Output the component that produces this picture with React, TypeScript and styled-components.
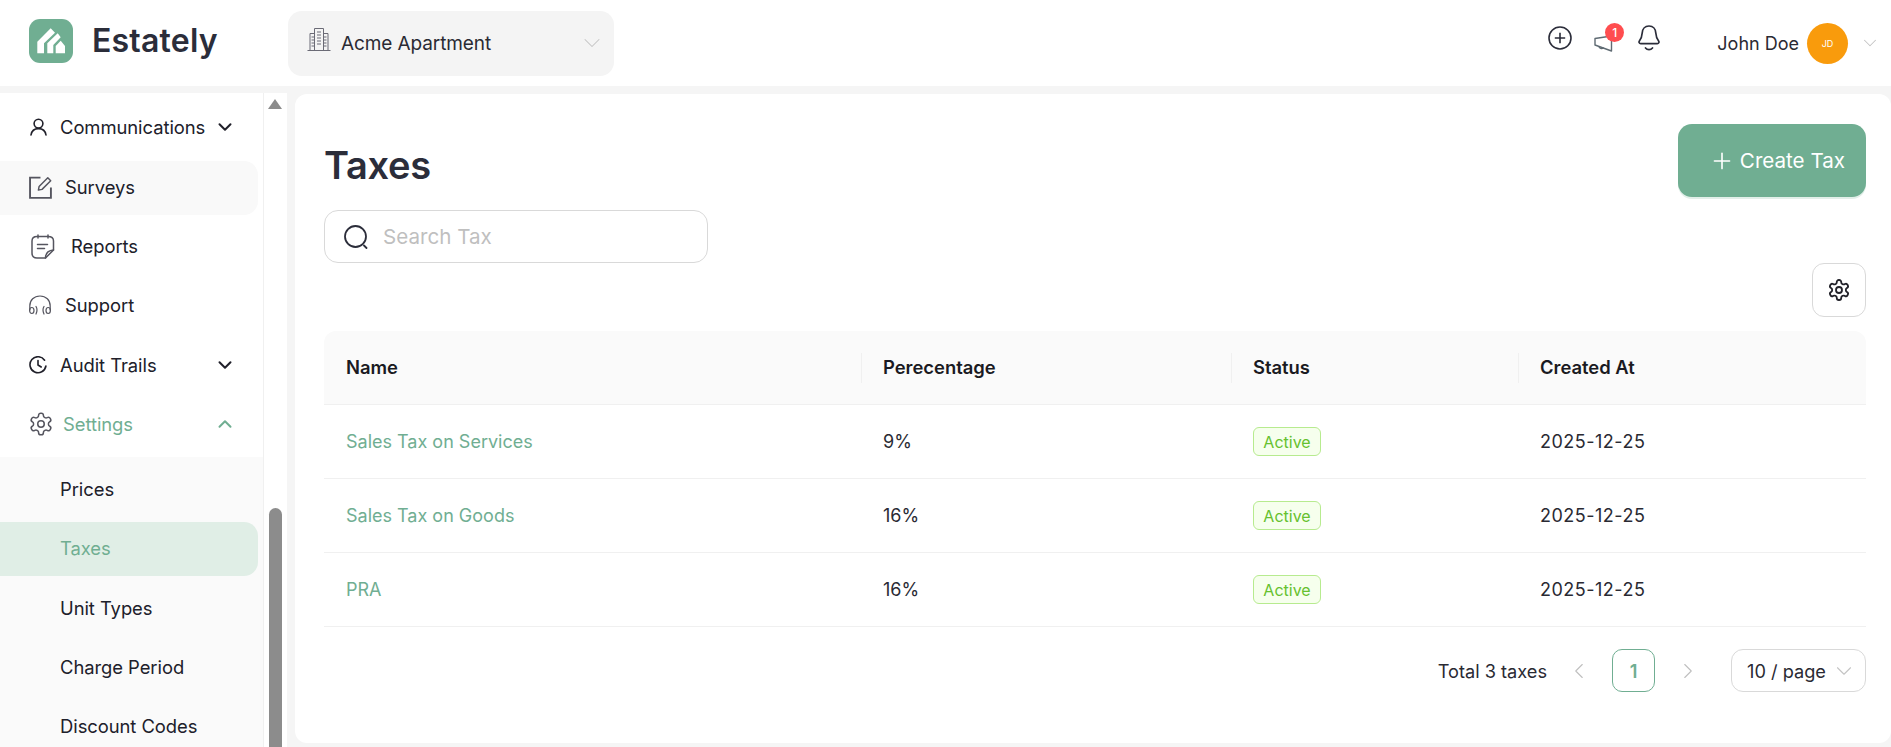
import React from "react";
import styled, { createGlobalStyle } from "styled-components";
import { ChevronDown, ChevronUp, ChevronLeft, ChevronRight, Plus } from "lucide-react";

const font = `"Inter", "Noto Sans", "Liberation Sans", sans-serif`;
const green = "#70ae92";

const Global = createGlobalStyle`
  html, body { margin: 0; padding: 0; height: 100%; overflow: hidden; background: #f5f5f5; }
  body { font-family: ${font}; color: #1f1f28; }
  #root { height: 100%; }
  * { box-sizing: border-box; }
`;

const Page = styled.div`
  width: 1891px;
  height: 747px;
  display: flex;
  flex-direction: column;
  overflow: hidden;
`;

const Header = styled.header`
  height: 86px;
  flex: none;
  background: #fff;
  display: flex;
  align-items: center;
  padding: 0 10px 0 29px;
`;

const Brand = styled.div`
  width: 259px;
  margin-bottom: 4px;
  display: flex;
  align-items: center;
  gap: 19px;
`;

const BrandName = styled.span`
  font-size: 32px;
  font-weight: 600;
  color: #2b2d3a;
  letter-spacing: 0.2px;
  margin-bottom: 2px;
`;

const PropertySelect = styled.div`
  width: 326px;
  height: 65px;
  border-radius: 14px;
  background: #f4f4f4;
  display: flex;
  align-items: center;
  padding: 0 8px 0 19px;
  color: #2a2a33;
  font-size: 19px;
`;

const PropertyIcon = styled.span`
  display: flex;
  margin-bottom: 9px;
`;

const PropertyLabel = styled.span`
  margin-left: 10px;
  flex: 1;
  letter-spacing: -0.1px;
`;

const HeaderActions = styled.div`
  margin-left: auto;
  display: flex;
  align-items: center;
`;

const ActionIcon = styled.div<{ $mr: number; $up?: number }>`
  position: relative;
  display: flex;
  margin-right: ${(p) => p.$mr}px;
  margin-bottom: ${(p) => p.$up ?? 0}px;
`;

const Badge = styled.span`
  position: absolute;
  top: -12px;
  right: -11px;
  width: 19px;
  height: 19px;
  border-radius: 50%;
  background: #ff4d4f;
  color: #fff;
  font-size: 12px;
  line-height: 19px;
  font-weight: 500;
  text-align: center;
`;

const UserName = styled.span`
  font-size: 18px;
  color: #2a2a33;
  margin-right: 8px;
`;

const Avatar = styled.div`
  width: 41px;
  height: 41px;
  border-radius: 50%;
  background: #f99b0c;
  color: #fff;
  font-size: 9px;
  display: flex;
  align-items: center;
  justify-content: center;
  margin-right: 11px;
`;

const Body = styled.div`
  flex: 1;
  display: flex;
  min-height: 0;
  padding-top: 7px;
`;

const Sidebar = styled.aside`
  width: 287px;
  flex: none;
  display: flex;
  background: #fff;
  overflow: hidden;
`;

const Nav = styled.nav`
  width: 264px;
  flex: none;
  padding-top: 8px;
  border-right: 1px solid #f0f0f0;
  overflow: hidden;
`;

const NavRow = styled.div<{ $hover?: boolean; $gapAfter?: number; $active?: boolean; $left: number }>`
  height: 54px;
  width: 258px;
  margin-bottom: ${(p) => p.$gapAfter ?? 5}px;
  padding: 0 22px 2px ${(p) => p.$left}px;
  display: flex;
  align-items: center;
  border-radius: 0 14px 14px 0;
  font-size: 18.4px;
  color: ${(p) => (p.$active ? green : "#20202a")};
  background: ${(p) => (p.$hover ? "#f9f9f9" : "transparent")};
`;

const NavIcon = styled.span<{ $w: number }>`
  width: ${(p) => p.$w}px;
  flex: none;
  display: flex;
  color: #4a4a55;
`;

const NavText = styled.span`
  flex: 1;
  white-space: nowrap;
  letter-spacing: -0.05px;
`;

const SubMenu = styled.div`
  background: #fafafa;
  padding-top: 6px;
`;

const SubRow = styled(NavRow)<{ $selected?: boolean }>`
  background: ${(p) => (p.$selected ? "#e0eee6" : "transparent")};
  color: ${(p) => (p.$selected ? green : "#20202a")};
`;

const ScrollTrack = styled.div`
  width: 23px;
  flex: none;
  position: relative;
`;

const ScrollArrow = styled.div`
  margin: 6px 0 0 4px;
  width: 0;
  height: 0;
  border-left: 7px solid transparent;
  border-right: 7px solid transparent;
  border-bottom: 10px solid #8c8c8c;
`;

const ScrollThumb = styled.div`
  position: absolute;
  left: 5px;
  top: 415px;
  bottom: -10px;
  width: 13px;
  border-radius: 7px 7px 0 0;
  background: #8c8c8c;
`;

const Main = styled.main`
  flex: 1;
  margin: 1px 0 4px 8px;
  background: #fff;
  border-radius: 12px;
  padding: 30px 25px 0 29px;
  min-width: 0;
`;

const TopRow = styled.div`
  display: flex;
  justify-content: space-between;
  align-items: flex-start;
  height: 86px;
`;

const Title = styled.h1`
  margin: 18px 0 0;
  font-size: 38px;
  line-height: 46px;
  font-weight: 600;
  color: #2b2d3a;
  letter-spacing: -0.3px;
`;

const CreateButton = styled.button`
  width: 188px;
  height: 73px;
  border: 0;
  border-radius: 14px;
  background: ${green};
  color: #fff;
  font-family: ${font};
  font-size: 20.6px;
  display: flex;
  align-items: center;
  justify-content: flex-end;
  gap: 5px;
  padding: 0 21px 0 0;
  box-shadow: 0 2px 0 rgba(112, 174, 146, 0.2);
`;

const SearchBox = styled.div`
  width: 384px;
  height: 53px;
  border: 1px solid #d9d9d9;
  border-radius: 14px;
  display: flex;
  align-items: center;
  padding-left: 19px;
  gap: 15px;
  color: #bfbfbf;
  font-size: 20.6px;
`;

const ToolRow = styled.div`
  display: flex;
  justify-content: flex-end;
`;

const SettingsButton = styled.div`
  width: 54px;
  height: 54px;
  border: 1px solid #d9d9d9;
  border-radius: 12px;
  display: flex;
  align-items: center;
  justify-content: center;
`;

const Table = styled.div`
  margin-top: 14px;
`;

const Grid = styled.div`
  display: grid;
  grid-template-columns: 537px 370px 287px 348px;
`;

const HeadRow = styled(Grid)`
  height: 74px;
  background: #fafafa;
  border-radius: 12px 12px 0 0;
  border-bottom: 1px solid #f0f0f0;
`;

const HeadCell = styled.div<{ $sep?: boolean }>`
  padding: 0 0 2px 22px;
  display: flex;
  align-items: center;
  font-size: 18.4px;
  font-weight: 600;
  color: #1a1a22;
  position: relative;
  &::before {
    content: "";
    display: ${(p) => (p.$sep ? "block" : "none")};
    position: absolute;
    left: 0;
    top: 50%;
    width: 1px;
    height: 30px;
    margin-top: -15px;
    background: #f0f0f0;
  }
`;

const BodyRow = styled(Grid)`
  height: 74px;
  border-bottom: 1px solid #f0f0f0;
`;

const Cell = styled.div<{ $link?: boolean; $spaced?: boolean }>`
  padding-left: 22px;
  display: flex;
  align-items: center;
  font-size: 18px;
  letter-spacing: ${(p) => (p.$spaced ? "0.5px" : "0")};
  color: ${(p) => (p.$link ? green : "#2a2a33")};
`;

const Tag = styled.span`
  height: 29px;
  width: 68px;
  border: 1px solid #b7eb8f;
  background: #f6ffed;
  color: #66c12f;
  border-radius: 6px;
  font-size: 16px;
  letter-spacing: 0;
  display: flex;
  align-items: center;
  justify-content: center;
`;

const Pagination = styled.div`
  margin-top: 22px;
  display: flex;
  align-items: center;
  justify-content: flex-end;
  font-size: 18.2px;
  color: #2a2a33;
`;

const Total = styled.span`
  margin-right: 19px;
`;

const PageArrow = styled.span`
  display: flex;
  color: #bfbfbf;
`;

const PageNum = styled.span`
  width: 43px;
  height: 43px;
  margin: 0 20px;
  border: 1px solid ${green};
  border-radius: 10px;
  color: ${green};
  font-weight: 600;
  display: flex;
  align-items: center;
  justify-content: center;
`;

const PageSize = styled.div`
  width: 135px;
  height: 43px;
  margin-left: 30px;
  border: 1px solid #d9d9d9;
  border-radius: 12px;
  display: flex;
  align-items: center;
  justify-content: space-between;
  padding: 0 8px 0 15px;
`;

const Logo = () => (
  <svg width="44" height="44" viewBox="0 0 44 44">
    <rect width="44" height="44" rx="11" fill={green} />
    <path d="M8.300 34.300V22.700L21.700 9.300 26 13.700 15 24.300V34.300z" fill="#fff" />
    <path d="M18.300 34.300V24.300L28.700 14.300l3 4L24.300 26V34.300z" fill="#fff" />
    <path d="M26.700 34.300V27L31.700 21.700 36 27V34.300z" fill="#fff" />
  </svg>
);

const Building = () => (
  <svg width="24" height="24" viewBox="0 0 24 24" fill="none" stroke="#6b6b76" strokeWidth="1">
    <path d="M0.500 23.500h23M3 23.500V6.500h4.500M7.500 23.500V1.500h9v22M16.500 6.500H21v17" />
    <path d="M10 5h4M10 8h4M10 11h4M10 14h4M10 17h4M4.500 10h3M4.500 13h3M4.500 16h3M4.500 19h3M16.500 10h3M16.500 13h3M16.500 16h3M16.500 19h3" />
  </svg>
);

const CirclePlusIcon = () => (
  <svg width="24" height="24" viewBox="0 0 24 24" fill="none" stroke="#2b2d3a" strokeWidth="1.600">
    <circle cx="12" cy="12" r="11" />
    <path d="M12 6.800v10.400M6.800 12h10.400" />
  </svg>
);

const MegaphoneIcon = () => (
  <svg width="19" height="17" viewBox="0 0 19 17" fill="none" stroke="#5f6b73" strokeWidth="1.400">
    <path d="M1 3.500l16.500 -2.500v15L1 10z" strokeLinejoin="round" />
    <path d="M5 11c0 2.500 3 3.500 4.500 1.500" />
  </svg>
);

const BellIcon = () => (
  <svg width="22" height="27" viewBox="0 0 22 27" fill="none" stroke="#2b2d3a" strokeWidth="1.700" strokeLinejoin="round">
    <path d="M11 1c4.200 0 6.600 3.200 6.800 7 .2 3.600 1 5.600 2.800 8 .8 1.200.2 2.600-1.300 2.600H2.700c-1.500 0-2.100-1.400-1.300-2.600 1.800-2.400 2.600-4.400 2.800-8C4.400 4.200 6.800 1 11 1z" />
    <path d="M7.500 23c1.800 2.200 5.200 2.200 7 0" strokeLinecap="round" />
  </svg>
);

const PersonIcon = () => (
  <svg width="17" height="18" viewBox="0 0 17 18" fill="none" stroke="#20202a" strokeWidth="1.600" strokeLinecap="round">
    <circle cx="8.500" cy="5.600" r="4.400" />
    <path d="M1 17c.6-3.800 3.600-6.400 7.500-6.400S15.400 13.200 16 17" />
  </svg>
);

const SurveyIcon = () => (
  <svg width="24" height="23" viewBox="0 0 23 22" fill="none" stroke="#55555f" strokeWidth="1.800">
    <path d="M11 1.500H1v19.500h20v-10" />
    <path d="M9 13.500l.7-3.500 8.300-8.300 2.800 2.800-8.300 8.300z" strokeWidth="1.400" strokeLinejoin="round" />
  </svg>
);

const ReportIcon = () => (
  <svg width="24" height="25" viewBox="0 0 24 25" fill="none" stroke="#55555f" strokeWidth="1.500" strokeLinecap="round" strokeLinejoin="round">
    <path d="M14.500 24H6c-3 0-5-2-5-5V7c0-3 2-4.500 5-4.500h11c3.500 0 5.500 1.500 5.500 4.500v9z" />
    <path d="M7 1v3M17 1v3M6.500 10.500h10M6.500 14.500h7" />
    <path d="M14.500 24c0-5 2.500-7.500 8-8" />
  </svg>
);

const HeadsetIcon = () => (
  <svg width="24" height="20" viewBox="0 0 24 20" fill="none" stroke="#55555f" strokeWidth="1.200" strokeLinecap="round">
    <path d="M1.800 15V11C1.800 5 6 1 12 1s10.200 4 10.200 10v4" />
    <ellipse cx="3.800" cy="15.500" rx="2.200" ry="3" />
    <ellipse cx="20.200" cy="15.500" rx="2.200" ry="3" />
    <path d="M8 11.500c1.200 2 1.200 5 0 7.500M16 11.500c-1.200 2-1.200 5 0 7.500" />
  </svg>
);

const ClockIcon = () => (
  <svg width="18" height="18" viewBox="0 0 18 18" fill="none" stroke="#20202a" strokeWidth="1.600" strokeLinecap="round" strokeLinejoin="round">
    <path d="M15.600 4.200A8 8 0 1 0 16.900 10" />
    <path d="M9 4.500V9l3.200 2" />
  </svg>
);

const GearIcon = ({ size, color, weight }: { size: number; color: string; weight: number }) => (
  <svg width={size} height={size} viewBox="0 0 24 24" fill="none" stroke={color} strokeWidth={weight} strokeLinecap="round" strokeLinejoin="round">
    <path d="M12.220 2h-.44a2 2 0 0 0-2 2v.18a2 2 0 0 1-1 1.730l-.43.250a2 2 0 0 1-2 0l-.150-.080a2 2 0 0 0-2.730.730l-.220.380a2 2 0 0 0 .730 2.730l.150.100a2 2 0 0 1 1 1.720v.510a2 2 0 0 1-1 1.740l-.150.090a2 2 0 0 0-.730 2.730l.220.380a2 2 0 0 0 2.730.730l.150-.080a2 2 0 0 1 2 0l.430.250a2 2 0 0 1 1 1.730V20a2 2 0 0 0 2 2h.440a2 2 0 0 0 2-2v-.180a2 2 0 0 1 1-1.730l.430-.250a2 2 0 0 1 2 0l.150.080a2 2 0 0 0 2.730-.730l.220-.390a2 2 0 0 0-.730-2.730l-.150-.080a2 2 0 0 1-1-1.740v-.500a2 2 0 0 1 1-1.740l.150-.090a2 2 0 0 0 .730-2.730l-.220-.380a2 2 0 0 0-2.730-.730l-.150.080a2 2 0 0 1-2 0l-.430-.250a2 2 0 0 1-1-1.730V4a2 2 0 0 0-2-2z" />
    <circle cx="12" cy="12" r="3" />
  </svg>
);

const SearchIcon = () => (
  <svg width="24" height="24" viewBox="0 0 24 24" fill="none" stroke="#2b2d3a" strokeWidth="1.800" strokeLinecap="round">
    <circle cx="11.500" cy="11.500" r="10.500" />
    <path d="M20 20.500l2.500 2.500" />
  </svg>
);

const rows = [
  { name: "Sales Tax on Services", pct: "9%" },
  { name: "Sales Tax on Goods", pct: "16%" },
  { name: "PRA", pct: "16%" },
];

export default function App() {
  return (
    <Page>
      <Global />
      <Header>
        <Brand>
          <Logo />
          <BrandName>Estately</BrandName>
        </Brand>
        <PropertySelect>
          <PropertyIcon><Building /></PropertyIcon>
          <PropertyLabel>Acme Apartment</PropertyLabel>
          <ChevronDown size={28} color="#c4c4c4" strokeWidth={0.9} />
        </PropertySelect>
        <HeaderActions>
          <ActionIcon $mr={22} $up={10}><CirclePlusIcon /></ActionIcon>
          <ActionIcon $mr={25}><MegaphoneIcon /><Badge>1</Badge></ActionIcon>
          <ActionIcon $mr={57} $up={10}><BellIcon /></ActionIcon>
          <UserName>John Doe</UserName>
          <Avatar>JD</Avatar>
          <ChevronDown size={22} color="#c4c4c4" strokeWidth={1.1} />
        </HeaderActions>
      </Header>
      <Body>
        <Sidebar>
          <Nav>
            <NavRow $left={30} $gapAfter={6}>
              <NavIcon $w={30}><PersonIcon /></NavIcon>
              <NavText>Communications</NavText>
              <ChevronDown size={22} strokeWidth={2.2} />
            </NavRow>
            <NavRow $left={29} $hover>
              <NavIcon $w={36}><SurveyIcon /></NavIcon>
              <NavText>Surveys</NavText>
            </NavRow>
            <NavRow $left={31}>
              <NavIcon $w={40}><ReportIcon /></NavIcon>
              <NavText>Reports</NavText>
            </NavRow>
            <NavRow $left={28} $gapAfter={6}>
              <NavIcon $w={37}><HeadsetIcon /></NavIcon>
              <NavText>Support</NavText>
            </NavRow>
            <NavRow $left={29}>
              <NavIcon $w={31}><ClockIcon /></NavIcon>
              <NavText>Audit Trails</NavText>
              <ChevronDown size={22} strokeWidth={2.2} />
            </NavRow>
            <NavRow $left={28} $active $gapAfter={5}>
              <NavIcon $w={35}><GearIcon size={26} color="#55555f" weight={1.400} /></NavIcon>
              <NavText>Settings</NavText>
              <ChevronUp size={22} strokeWidth={2.2} />
            </NavRow>
            <SubMenu>
              <SubRow $left={60}><NavText>Prices</NavText></SubRow>
              <SubRow $left={60} $selected $gapAfter={6}><NavText>Taxes</NavText></SubRow>
              <SubRow $left={60}><NavText>Unit Types</NavText></SubRow>
              <SubRow $left={60}><NavText>Charge Period</NavText></SubRow>
              <SubRow $left={60}><NavText>Discount Codes</NavText></SubRow>
            </SubMenu>
          </Nav>
          <ScrollTrack>
            <ScrollArrow />
            <ScrollThumb />
          </ScrollTrack>
        </Sidebar>
        <Main>
          <TopRow>
            <Title>Taxes</Title>
            <CreateButton>
              <Plus size={26} strokeWidth={1.500} />
              Create Tax
            </CreateButton>
          </TopRow>
          <SearchBox>
            <SearchIcon />
            Search Tax
          </SearchBox>
          <ToolRow>
            <SettingsButton><GearIcon size={24} color="#22222a" weight={1.800} /></SettingsButton>
          </ToolRow>
          <Table>
            <HeadRow>
              <HeadCell>Name</HeadCell>
              <HeadCell $sep>Perecentage</HeadCell>
              <HeadCell $sep>Status</HeadCell>
              <HeadCell $sep>Created At</HeadCell>
            </HeadRow>
            {rows.map((r) => (
              <BodyRow key={r.name}>
                <Cell $link>{r.name}</Cell>
                <Cell>{r.pct}</Cell>
                <Cell><Tag>Active</Tag></Cell>
                <Cell $spaced>2025-12-25</Cell>
              </BodyRow>
            ))}
          </Table>
          <Pagination>
            <Total>Total 3 taxes</Total>
            <PageArrow><ChevronLeft size={26} strokeWidth={1} /></PageArrow>
            <PageNum>1</PageNum>
            <PageArrow><ChevronRight size={26} strokeWidth={1} /></PageArrow>
            <PageSize>
              10 / page
              <ChevronDown size={26} color="#c4c4c4" strokeWidth={1} />
            </PageSize>
          </Pagination>
        </Main>
      </Body>
    </Page>
  );
}
